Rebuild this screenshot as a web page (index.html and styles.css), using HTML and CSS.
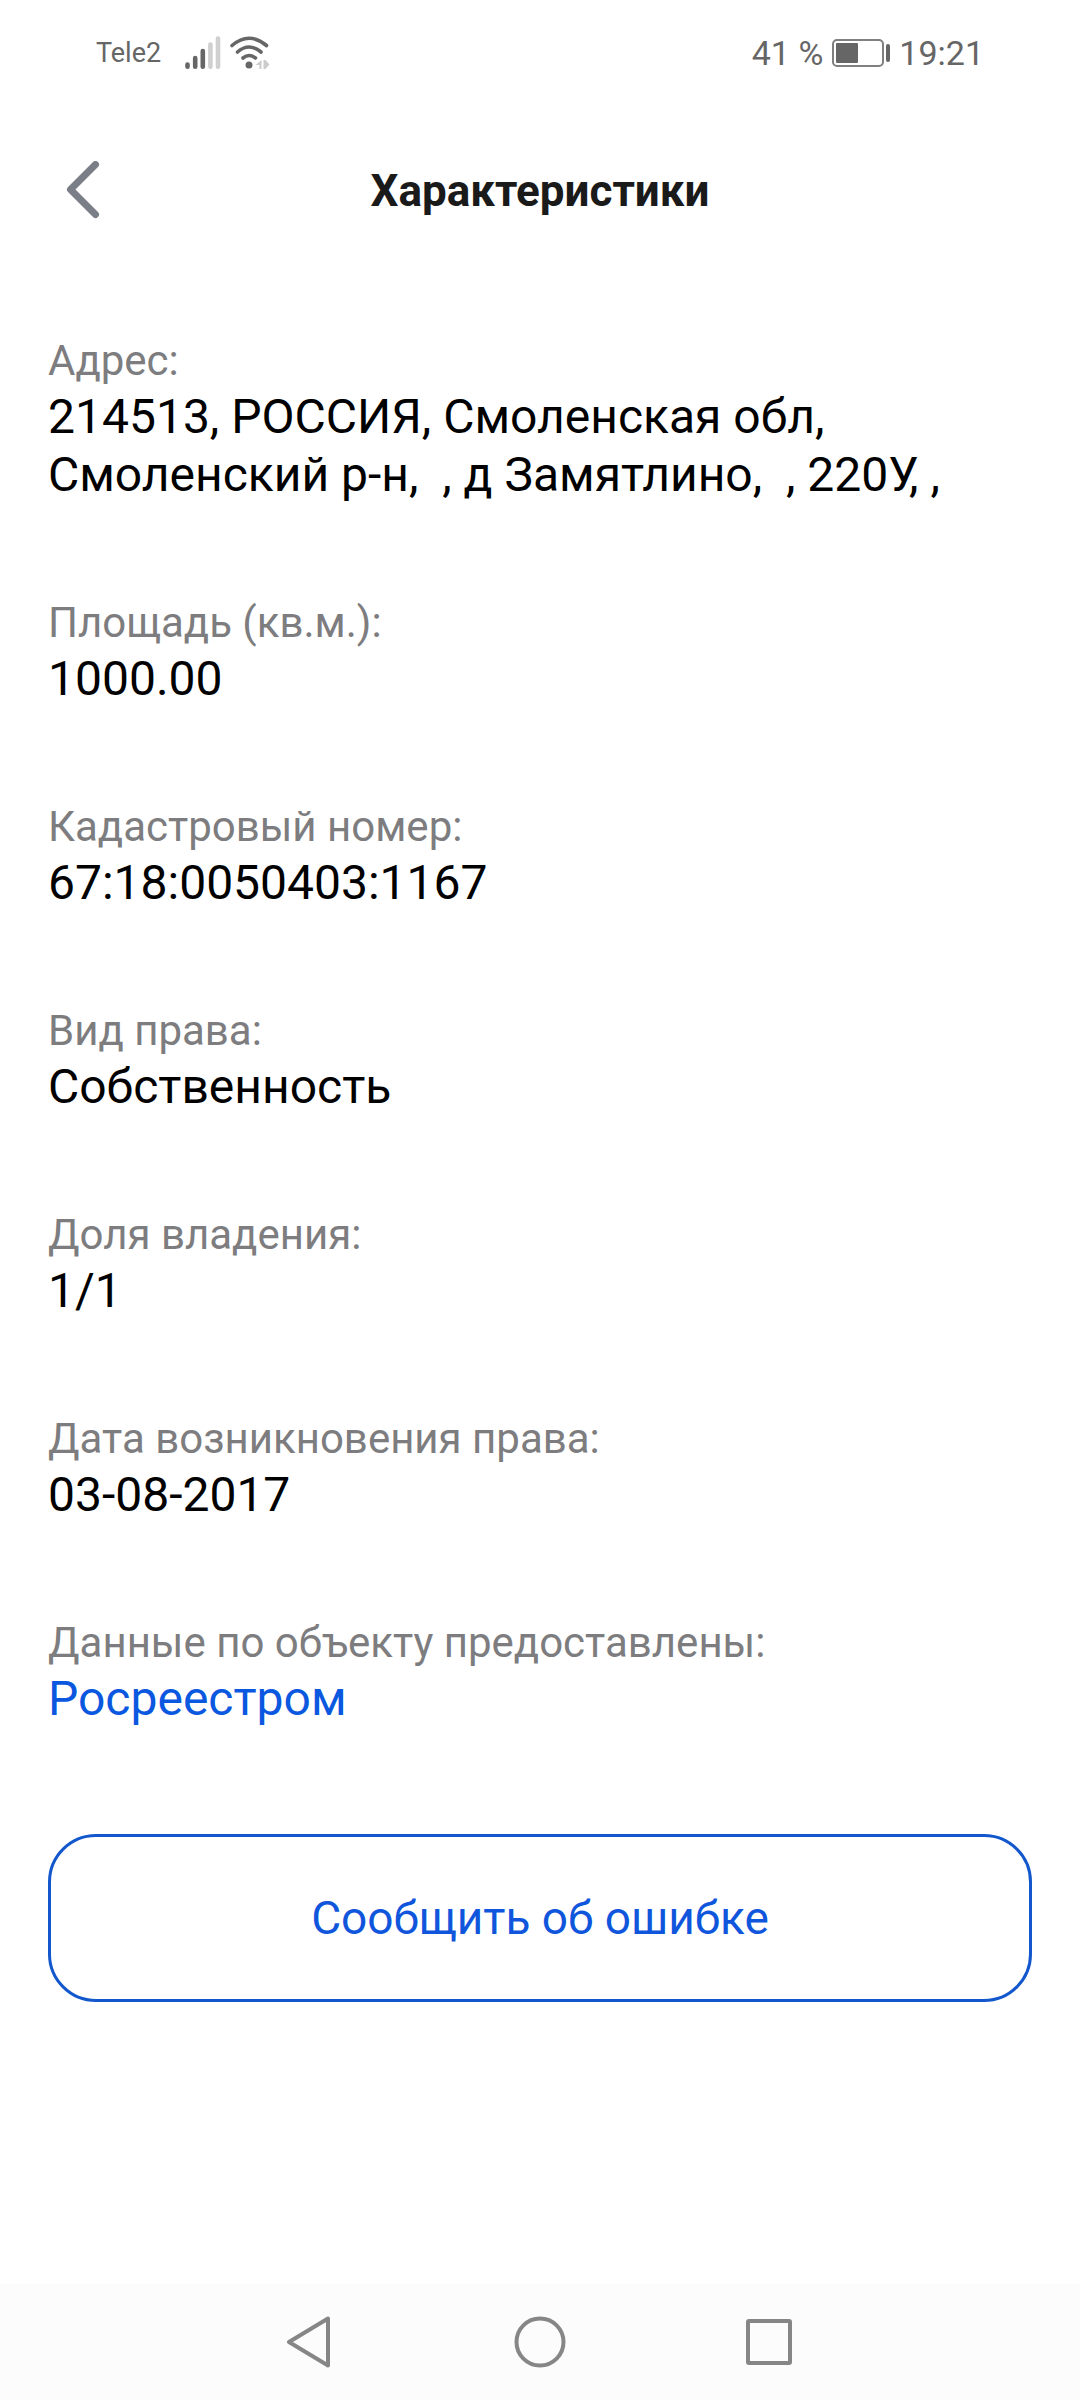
FILE: index.html
```html
<!DOCTYPE html>
<html lang="ru">
<head>
<meta charset="utf-8">
<meta name="viewport" content="width=device-width, initial-scale=1">
<title>Характеристики</title>
<link rel="stylesheet" href="styles.css">
</head>
<body>
<div class="screen">
  <div class="status">
    <span class="carrier">Tele2</span>
    <svg class="signal" width="36" height="34" viewBox="0 0 36 34" aria-hidden="true">
      <g fill="none" stroke-width="4.6" stroke-linecap="round">
        <path stroke="#666" d="M2.5 28.5v2.2M10.2 22v8.7M17.8 15v15.7"/>
        <path stroke="#d0d0d0" d="M25.4 8.5v22.2M33 2.5v28.2"/>
      </g>
    </svg>
    <svg class="wifi" width="40" height="34" viewBox="0 0 40 34" aria-hidden="true">
      <g fill="none" stroke="#666" stroke-width="3.6" stroke-linecap="round">
        <path d="M2 9.5Q19 -5 36.500 9.500"/><path d="M7.500 16Q19 6 31 16"/><path d="M13 22Q19 17 25.500 22"/>
      </g>
      <circle cx="19" cy="29" r="3.500" fill="#666"/>
      <path d="M31.500 24v9h-2v-4H25.500zM33.500 24h2l4 4.500-4 4.500h-2z" fill="#ccc"/>
    </svg>
    <span class="percent">41 %</span>
    <svg class="battery" width="58" height="28" viewBox="0 0 58 28" aria-hidden="true">
      <rect x="1" y="1" width="50" height="26" rx="4" fill="none" stroke="#808080" stroke-width="2"/>
      <rect x="4" y="4" width="22" height="20" rx="1" fill="#666"/>
      <rect x="54" y="5" width="4" height="18" rx="2" fill="#666"/>
    </svg>
    <time class="clock">19:21</time>
  </div>
  <header class="header">
    <button class="back" type="button" aria-label="Назад">
      <svg width="36" height="60" viewBox="0 0 36 60"><path d="M29.500 3.500L4.500 28.500l25 25" fill="none" stroke="#7a7e86" stroke-width="7" stroke-linecap="round" stroke-linejoin="round"/></svg>
    </button>
    <h1 class="title">Характеристики</h1>
  </header>
  <main class="main">
    <dl class="details">
      <div class="item"><dt>Адрес:</dt><dd class="address">214513, РОССИЯ, Смоленская обл, Смоленский р-н,  , д Замятлино,  , 220У, ,</dd></div>
      <div class="item"><dt>Площадь (кв.м.):</dt><dd>1000.00</dd></div>
      <div class="item"><dt>Кадастровый номер:</dt><dd>67:18:0050403:1167</dd></div>
      <div class="item"><dt>Вид права:</dt><dd>Собственность</dd></div>
      <div class="item"><dt>Доля владения:</dt><dd>1/1</dd></div>
      <div class="item"><dt>Дата возникновения права:</dt><dd>03-08-2017</dd></div>
      <div class="item"><dt>Данные по объекту предоставлены:</dt><dd><a class="link" href="#">Росреестром</a></dd></div>
    </dl>
    <button class="report" type="button">Сообщить об ошибке</button>
  </main>
  <nav class="navbar">
    <button type="button" aria-label="Назад"><svg width="52" height="52" viewBox="0 0 52 52"><path d="M44 2.500v47L5 26z"/></svg></button>
    <button type="button" aria-label="Домой"><svg width="52" height="52" viewBox="0 0 52 52"><circle cx="26" cy="26" r="23.500"/></svg></button>
    <button type="button" aria-label="Недавние"><svg width="52" height="52" viewBox="0 0 52 52"><rect x="4" y="5" width="42" height="42" rx="1"/></svg></button>
  </nav>
</div>
</body>
</html>
```
FILE: styles.css
```css
* { box-sizing: border-box; }
body { margin: 0; background: #fff; color: #000; font-family: Roboto, sans-serif; }
button { padding: 0; border: 0; background: none; font: inherit; color: inherit; }
.screen { display: flex; flex-direction: column; min-height: 100vh; }
.status { display: flex; align-items: center; height: 106px; padding: 0 96px; color: #666; font-size: 34px; }
.carrier { font-size: 27px; }
.signal { margin-left: 24px; }
.wifi { margin-left: 9px; }
.percent { margin-left: auto; }
.battery { margin: 0 9px; }
.header { display: grid; grid-template-columns: 72px 1fr 72px; align-items: center; height: 170px; padding: 0 48px; }
.back { display: flex; justify-content: center; }
.title { margin: 0; text-align: center; font-size: 44px; line-height: 50px; font-weight: 700; color: #1a1a1a; }
.main { flex: 1; padding: 58px 48px; }
.details { display: flex; flex-direction: column; gap: 92px; margin: 0; }
dt { font-size: 42px; line-height: 54px; color: #7d7d80; }
dd { margin: 0; font-size: 48px; line-height: 58px; }
.address { white-space: pre-wrap; }
.link { color: #0a57e0; text-decoration: none; }
.report { display: block; width: 100%; height: 168px; margin-top: 106px; border: 3px solid #1257cc; border-radius: 48px; color: #0f56dc; font-size: 46px; }
.navbar { display: flex; justify-content: center; align-items: center; gap: 178px; height: 116px; background: #fcfcfc; }
.navbar button { display: flex; }
.navbar svg { fill: none; stroke: #868686; stroke-width: 4; stroke-linejoin: round; }
```
